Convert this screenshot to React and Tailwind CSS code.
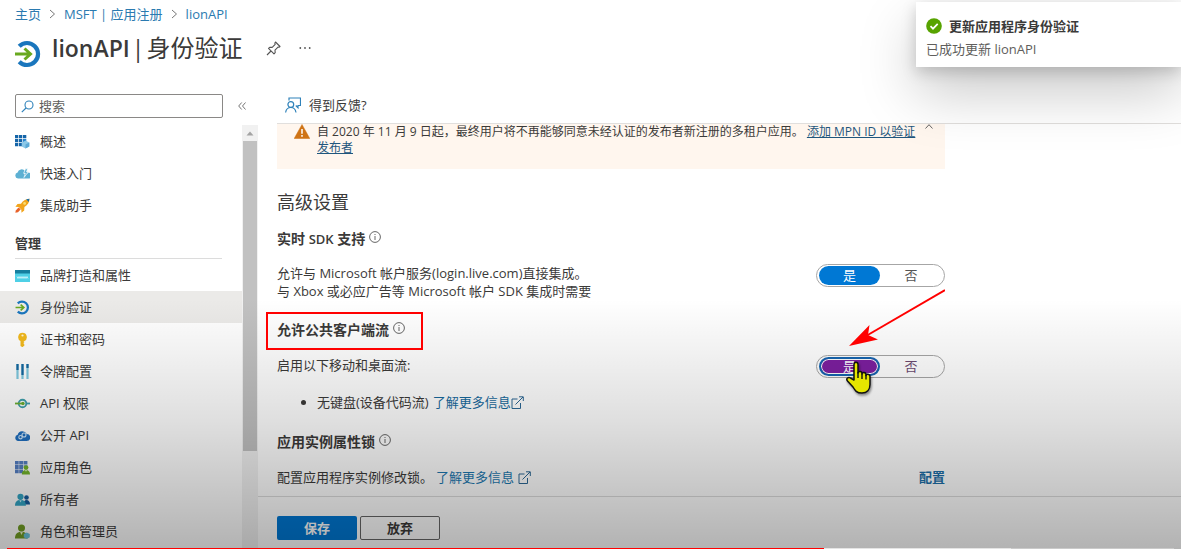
import React from "react";

function AuthIcon({ className }) {
  return (
    <svg viewBox="0 0 26 28" className={className} aria-hidden="true">
      <path d="M4.2 6.3A11 11 0 1 1 4.2 21.7" fill="none" stroke="#1a76bd" strokeWidth="4.2" />
      <path d="M0 14h15M9.5 8.5l6 5.5-6 5.5" fill="none" stroke="#69a91f" strokeWidth="3" />
    </svg>
  );
}

const icons = {
  overview: (
    <>
      <path d="M0 1h3.3v3.3H0zM4 1h3.3v3.3H4zM8 1h3.3v3.3H8zM0 5h3.3v3.3H0zM4 5h3.3v3.3H4zM0 9h3.3v3.3H0zM4 9h3.3v3.3H4z" fill="#1565a8" />
      <path d="M8 5h3.3v3.3H8z" fill="#2584cf" />
      <path d="M10.5 6.5l3.8 2v4l-3.8 2-3.8-2v-4z" fill="#8cc8e8" />
      <path d="M10.5 10.4l3.8-1.9v4l-3.8 2z" fill="#5ba9d6" />
    </>
  ),
  quickstart: (
    <>
      <path d="M3 12.5a3 3 0 0 1-.4-5.9A4.200 4.200 0 0 1 10 5l-1 3h2.500l2-1.500a3 3 0 0 1-.5 6z" fill="#5db0d3" />
      <path d="M10.500 2.800h2.300l-1.300 3h1.800L9 11.500l1.300-4.200H8.600z" fill="#5db0d3" stroke="#fff" strokeWidth=".7" />
    </>
  ),
  rocket: (
    <>
      <path d="M14.5.7c-4 .2-6.7 2-8.5 5L2.5 6 .4 8.8l3.3.1 2.6 2.7.2 3.1 2.7-2.2.2-3.4c3-2 5-4.500 5.100-8.400z" fill="#f2a51c" />
      <path d="M14.500.7l-3.300.6 2.500 2.800z" fill="#1d6fa8" />
      <path d="M3.500 9.500L.8 12.500l-.5 2.300 2.700-.6 2.800-2.900z" fill="#e8622a" />
      <circle cx="9.600" cy="5.400" r="1.400" fill="#f7dd72" />
    </>
  ),
  branding: (
    <>
      <path d="M0 2h15v12H0z" fill="#4fd0e6" />
      <path d="M0 2h15v3.500H0z" fill="#167f9f" />
      <path d="M2 8.500l1 2 1-2 1 2 1-2M6 8.500l1 2 1-2 1 2 1-2M10 8.500l1 2 1-2 1 2" fill="none" stroke="#d9f7fc" strokeWidth=".8" />
    </>
  ),
  key: (
    <>
      <path d="M7.500.8a4.300 4.300 0 0 0-2 8.100v5l1.900 1.300 2-1.600v-1l-1-.9 1-.9-1-.9 1.100-1a4.300 4.300 0 0 0-2-8.100z" fill="#f2b91c" />
      <circle cx="7.500" cy="3.500" r="1.100" fill="#fff6d8" />
    </>
  ),
  token: (
    <>
      <path d="M2.500 0v15M7.500 0v15M12.500 0v15" stroke="#7fc9df" strokeWidth="2.200" />
      <path d="M2.500 0v6M7.500 0v11M12.500 0v4" stroke="#17679f" strokeWidth="2.200" />
    </>
  ),
  permissions: (
    <>
      <circle cx="7.500" cy="7.500" r="3.800" fill="none" stroke="#3fa0ac" strokeWidth="1.900" />
      <path d="M11.300 7.500H15" stroke="#3fa0ac" strokeWidth="1.800" />
      <path d="M0 7.500h8" stroke="#69ad32" strokeWidth="1.800" />
      <circle cx="8" cy="7.500" r="1.700" fill="#69ad32" />
    </>
  ),
  expose: (
    <>
      <path d="M3.200 13a3.200 3.200 0 0 1-.5-6.300A4.800 4.800 0 0 1 11.700 6 3.500 3.500 0 0 1 11.700 13z" fill="#1f6fc0" />
      <circle cx="5.500" cy="9.200" r="1.700" fill="none" stroke="#cfe7fb" strokeWidth="1.100" />
      <circle cx="9" cy="7" r="2" fill="none" stroke="#cfe7fb" strokeWidth="1.100" />
    </>
  ),
  roles: (
    <>
      <path d="M0 1h3.700v3.600H0zM4.200 1h3.800v3.600H4.200zM8.500 1h3.900v3.600H8.500zM0 5.100h3.700v3.800H0zM4.200 5.100h3.800v3.800H4.200zM0 9.400h3.700v3.800H0zM4.200 9.400h3.800v3.800H4.200z" fill="#5680c4" />
      <path d="M8.500 5.100h3.900v2.200H8.500z" fill="#87acdf" />
      <circle cx="11" cy="7.600" r="2.400" fill="#74b52a" />
      <path d="M6.800 14.500c0-3 1.500-4.600 4.200-4.600s4 1.600 4 4.600z" fill="#74b52a" />
      <path d="M10 10l1 1.800 1-1.800z" fill="#e4f5d0" />
    </>
  ),
  owners: (
    <>
      <circle cx="11.500" cy="5.500" r="2.300" fill="#165b9c" />
      <path d="M8.500 12.500c0-3 1-4.500 3-4.500s3.500 1.500 3.500 4.500z" fill="#165b9c" />
      <circle cx="5.500" cy="4.800" r="3.100" fill="#32a3c2" />
      <path d="M0 13.800c0-3.900 1.800-5.800 5.500-5.800s5.400 1.900 5.400 5.800z" fill="#32a3c2" />
      <path d="M4.300 8.200l1.200 2.400 1.200-2.400z" fill="#c9eef6" />
    </>
  ),
  admins: (
    <>
      <circle cx="6.500" cy="4" r="3.500" fill="#719d24" />
      <path d="M0 14.500c0-4.500 2.200-6.700 6.500-6.700s6 2.200 6 6.700z" fill="#719d24" />
      <path d="M5.100 8l1.400 2.900L7.900 8z" fill="#e6f2c8" />
      <path d="M11.800 8.500l3 1.600v3.200l-3 1.600-3-1.600v-3.200z" fill="#69c4dc" />
    </>
  ),
};

function NavItem({ icon, label, active }) {
  return (
    <li>
      <a
        href="#"
        aria-current={active ? "page" : undefined}
        className={`flex h-8 items-center gap-[10px] pl-[15px] text-[13px] ${active ? "bg-[#ebeae8]" : ""}`}
      >
        {icon === "auth" ? (
          <AuthIcon className="h-[15px] w-[15px]" />
        ) : (
          <svg viewBox="0 0 15 15" className="h-[15px] w-[15px]" aria-hidden="true">
            {icons[icon]}
          </svg>
        )}
        {label}
      </a>
    </li>
  );
}

function InfoIcon() {
  return (
    <svg viewBox="0 0 12 12" className="mb-1 h-3 w-3" fill="none" stroke="#555" strokeWidth=".9" aria-hidden="true">
      <circle cx="6" cy="6" r="5.400" />
      <path d="M6 5v4M6 3v1" />
    </svg>
  );
}

function ExternalIcon() {
  return (
    <svg viewBox="0 0 13 13" className="h-[13px] w-[13px]" fill="none" stroke="#2b6794" aria-hidden="true">
      <path d="M6.500 3H1v9.500h8.500V7M4.500 8.500L12 1M8 .8h4.300V5" />
    </svg>
  );
}

function Toggle({ name, label, focused }) {
  return (
    <div
      role="radiogroup"
      aria-label={label}
      className="relative flex h-[23px] w-[129px] shrink-0 rounded-full border border-[#a6a6a6] bg-white px-[2px] py-px text-[13px] leading-none"
    >
      <label
        className={`flex w-[61px] items-center justify-center rounded-full text-white ${
          focused ? "border-2 border-[#1565b0] bg-[#7d1fa0] inset-ring inset-ring-white" : "bg-[#0078d4]"
        }`}
      >
        <input type="radio" name={name} defaultChecked className="sr-only" />是
      </label>
      <label className={`flex flex-1 items-center justify-center ${focused ? "text-[#6b4a70]" : "text-[#555]"}`}>
        <input type="radio" name={name} className="sr-only" />否
      </label>
      {focused && (
        <>
          <svg
            viewBox="0 0 96 58"
            className="absolute bottom-[30px] left-8 z-20 h-[58px] w-24 max-w-none"
            aria-hidden="true"
          >
            <path d="M96 1L17 47" stroke="#f00" strokeWidth="2" />
            <path d="M0 57l20.500-21-1.500 10 10 4.500z" fill="#f00" />
          </svg>
          <svg viewBox="0 0 28 34" className="absolute left-7 top-[5px] z-20 h-[34px] w-7 drop-shadow-[1px_2px_1px_#0006]" aria-hidden="true">
            <path
              d="M9 19V3.500c0-3 4-3 4 0V12c0-2 4-2 4 .5V13c0-2 4-2 4 .8v.7c0-2 4-1.500 4 1v8c0 5-3 8.500-8 8.500-5.500 0-7-2.500-9-6l-5.500-6c-2-2.500 1-4.500 3-3z"
              fill="#e6e600"
              stroke="#111"
              strokeWidth="1.500"
              strokeLinejoin="round"
            />
            <path d="M13 11v6M17 12.500V18M21 14v4.500" stroke="#111" strokeWidth="1.400" />
          </svg>
        </>
      )}
    </div>
  );
}

export default function App() {
  return (
    <div className="relative flex h-screen flex-col overflow-hidden bg-white font-['Open_Sans','Noto_Sans_CJK_SC',sans-serif] text-[13px] leading-5 text-[#3b3a39]">
      <header className="flex flex-col pl-[15px]">
        <nav aria-label="Breadcrumb" className="flex items-center gap-[7px] pt-1 text-[#2a7ab0]">
          <a href="#">主页</a>
          <Chevron />
          <a href="#">MSFT | 应用注册</a>
          <Chevron />
          <a href="#">lionAPI</a>
        </nav>
        <div className="flex h-12 items-center">
          <AuthIcon className="mt-3 h-7 w-[26px]" />
          <h1 className="ml-[11px] flex items-baseline gap-[2px] text-2xl leading-8">
            <span className="text-[23px] font-semibold">lionAPI</span>
            <span className="text-[23px]">|</span>
            <span>身份验证</span>
          </h1>
          <button type="button" aria-label="固定" className="ml-6">
            <svg viewBox="0 0 15 15" className="h-[15px] w-[15px]" fill="none" stroke="#555" strokeWidth="1.100" strokeLinejoin="round">
              <path d="M9.500 1l4.500 4.500-1 .8-1-.2-3 3 .2 2.600-1.200 1.100L2.500 7.300l1.200-1 2.500.1 3-3-.4-1.200zM5 10L1 14" />
            </svg>
          </button>
          <button type="button" aria-label="更多" className="ml-[18px] text-[#555]">
            <svg viewBox="0 0 12 4" className="h-1 w-3" fill="#555">
              <circle cx="1.300" cy="2" r=".9" />
              <circle cx="6" cy="2" r=".9" />
              <circle cx="10.700" cy="2" r=".9" />
            </svg>
          </button>
        </div>
      </header>

      <div className="flex min-h-0 flex-1 pt-[22px]">
        <aside className="flex w-[258px] shrink-0 flex-col">
          <div className="flex items-center pl-[15px]">
            <label className="flex h-6 w-[208px] items-center gap-[5px] rounded-xs border border-[#8a8886] pl-[5px]">
              <svg viewBox="0 0 13 13" className="h-[13px] w-[13px] shrink-0" fill="none" stroke="#2f82ba" strokeWidth="1.100" aria-hidden="true">
                <circle cx="8" cy="5" r="4" />
                <path d="M5 8L.8 12.200" />
              </svg>
              <input type="search" aria-label="搜索" placeholder="搜索" className="w-full min-w-0 bg-transparent outline-none placeholder:text-[#605e5c]" />
            </label>
            <button type="button" aria-label="折叠" className="ml-[15px]">
              <svg viewBox="0 0 8 8" className="h-2 w-2" fill="none" stroke="#666" strokeWidth=".9">
                <path d="M3.700.5L.7 4l3 3.500M7.500.5l-3 3.500 3 3.500" />
              </svg>
            </button>
          </div>
          <div className="mt-[7px] flex min-h-0 flex-1">
            <nav aria-label="管理" className="min-w-0 flex-1 overflow-hidden">
              <ul>
                <NavItem icon="overview" label="概述" />
                <NavItem icon="quickstart" label="快速入门" />
                <NavItem icon="rocket" label="集成助手" />
              </ul>
              <h2 className="ml-[15px] mr-5 mt-3 border-b border-[#dcdcdc] pb-[5px] font-bold">管理</h2>
              <ul>
                <NavItem icon="branding" label="品牌打造和属性" />
                <NavItem icon="auth" label="身份验证" active />
                <NavItem icon="key" label="证书和密码" />
                <NavItem icon="token" label="令牌配置" />
                <NavItem icon="permissions" label="API 权限" />
                <NavItem icon="expose" label="公开 API" />
                <NavItem icon="roles" label="应用角色" />
                <NavItem icon="owners" label="所有者" />
                <NavItem icon="admins" label="角色和管理员" />
              </ul>
            </nav>
            <div className="flex w-4 flex-col items-center bg-[#f1f1f1]">
              <svg viewBox="0 0 16 16" className="h-4 w-4" aria-hidden="true">
                <path d="M4.500 10.500L8 6.500l3.500 4z" fill="#a3a3a3" />
              </svg>
              <div className="h-[73%] w-[14px] bg-[#c1c1c1]" />
            </div>
          </div>
        </aside>

        <main className="flex min-w-0 flex-1 flex-col">
          <div className="ml-[19px] flex border-b border-[#e1dfdd] pb-2 pl-2 pt-px">
            <button type="button" className="flex items-center gap-2">
              <svg viewBox="0 0 16 16" className="h-4 w-4" fill="none" stroke="#2f82ba" strokeWidth="1.200" aria-hidden="true">
                <path d="M4 3.500V1h11.500v7.500H13v2.300L10.800 8.500" />
                <circle cx="5.800" cy="7.500" r="2.900" />
                <path d="M.6 15.500c.5-3.300 2.200-5 5.200-5s4.700 1.700 5.200 5" />
              </svg>
              得到反馈?
            </button>
          </div>

          <div className="min-h-0 flex-1 overflow-hidden pl-[19px]">
            <div className="max-w-[668px]">
              <div className="flex h-[45px] items-start bg-[#fff6ee] pl-[17px] pr-3 text-xs leading-4">
                <svg viewBox="0 0 16 15" className="h-[15px] w-4 shrink-0" aria-hidden="true">
                  <path d="M8 .5L15.800 14.500H.2z" fill="#cf7315" stroke="#cf7315" strokeLinejoin="round" strokeWidth=".5" />
                  <path d="M8 5v4.800M8 11v1.700" stroke="#fff" strokeWidth="1.500" />
                </svg>
                <p className="ml-[7px] flex-1">
                  自 2020 年 11 月 9 日起，最终用户将不再能够同意未经认证的发布者新注册的多租户应用。{" "}
                  <a href="#" className="text-[#1f567d] underline">
                    添加 MPN ID 以验证发布者
                  </a>
                </p>
                <button type="button" aria-label="收起" className="ml-2">
                  <svg viewBox="0 0 8 5" className="h-[5px] w-2" fill="none" stroke="#555" strokeWidth=".9">
                    <path d="M.5 4.500L4 .7l3.500 3.800" />
                  </svg>
                </button>
              </div>

              <h2 className="mt-[21px] text-lg leading-6">高级设置</h2>

              <h3 className="mt-[15px] flex items-center gap-1 text-[14px] font-bold">
                <span>
                  实时 <span className="text-[13px] font-semibold">SDK</span> 支持
                </span>
                <InfoIcon />
              </h3>
              <div className="mt-[15px] flex items-start justify-between">
                <p className="leading-[18px]">
                  允许与 Microsoft 帐户服务(login.live.com)直接集成。
                  <br />与 Xbox 或必应广告等 Microsoft 帐户 SDK 集成时需要
                </p>
                <Toggle name="live-sdk" label="实时 SDK 支持" />
              </div>

              <div className="mt-5 flex">
                <h3 className="relative flex items-center gap-1 text-[14px] font-bold">
                  允许公共客户端流
                  <InfoIcon />
                  <span className="absolute -bottom-[10px] -left-[11px] -right-[18px] -top-2 z-20 border-2 border-[#f00]" />
                </h3>
              </div>
              <div className="mt-[15px] flex items-start justify-between">
                <p>启用以下移动和桌面流:</p>
                <Toggle name="public-flow" label="启用以下移动和桌面流" focused />
              </div>
              <ul className="mt-[14px] list-disc pl-10">
                <li>
                  <span className="flex items-center">
                    无键盘(设备代码流)
                    <a href="#" className="ml-1 flex items-center text-[#176a9e]">
                      了解更多信息
                      <ExternalIcon />
                    </a>
                  </span>
                </li>
              </ul>

              <h3 className="mt-5 flex items-center gap-1 text-[14px] font-bold">
                应用实例属性锁
                <InfoIcon />
              </h3>
              <div className="mt-[15px] flex justify-between">
                <p className="flex items-center gap-[3px]">
                  配置应用程序实例修改锁。
                  <a href="#" className="flex items-center gap-1 text-[#1c78b0]">
                    了解更多信息
                    <ExternalIcon />
                  </a>
                </p>
                <a href="#" className="font-bold text-[#1c6ea8]">
                  配置
                </a>
              </div>
            </div>
          </div>

          <footer className="flex gap-[3px] border-t border-[#dcdcdc] pb-[9px] pl-[19px] pt-[19px] font-bold">
            <button type="button" className="h-6 w-20 rounded-xs bg-[#0078d4] text-white">
              保存
            </button>
            <button type="button" className="h-6 w-20 rounded-xs border border-[#666] bg-white/60">
              放弃
            </button>
          </footer>
        </main>
      </div>

      <div className="pointer-events-none absolute inset-x-0 bottom-0 z-10 h-[250px] bg-linear-to-b from-transparent via-black/13 via-50% to-black/30" />

      <div className="absolute inset-x-[7px] bottom-0 z-20 flex h-px bg-[#cacaca]">
        <div className="w-[70%] bg-[#f00]" />
        <div className="w-[16%] bg-[#e4e4e4]" />
      </div>

      <section
        role="status"
        className="absolute right-0 top-[2px] z-20 w-[265px] bg-white px-[10px] pb-2 pt-[14px] shadow-[0_25px_57px_rgba(0,0,0,0.22),0_5px_14px_rgba(0,0,0,0.18)]"
      >
        <h2 className="flex items-center gap-[7px] font-bold">
          <svg viewBox="0 0 16 16" className="h-4 w-4" aria-hidden="true">
            <circle cx="8" cy="8" r="7.800" fill="#57a300" />
            <path d="M4.500 8.200l2.500 2.500 4.700-4.800" fill="none" stroke="#fff" strokeWidth="1.700" />
          </svg>
          更新应用程序身份验证
        </h2>
        <p className="mt-[3px] text-[#605e5c]">已成功更新 lionAPI</p>
      </section>
    </div>
  );
}

function Chevron() {
  return (
    <svg viewBox="0 0 7 10" className="mx-px h-[10px] w-[7px]" fill="none" stroke="#777" aria-hidden="true">
      <path d="M1 1l4.500 4L1 9" />
    </svg>
  );
}
